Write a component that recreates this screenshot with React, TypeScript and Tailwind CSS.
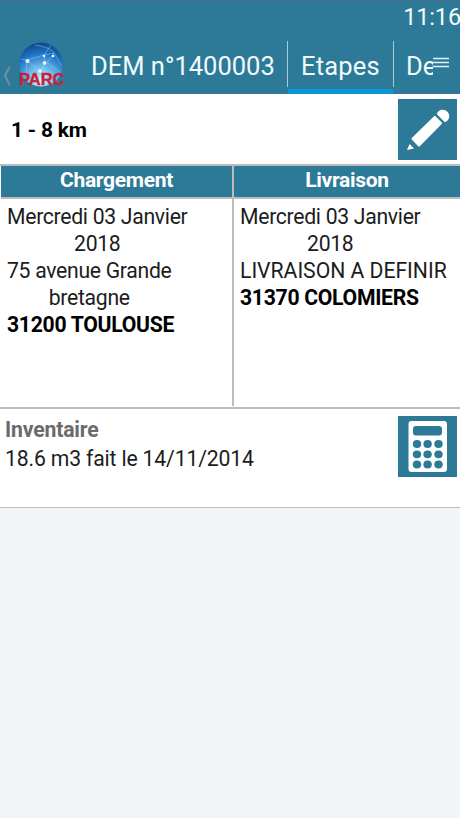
interface StopProps {
  title: string;
  lines: string[][];
  city: string;
  className: string;
}

interface TabProps {
  label: string;
  active?: boolean;
  className: string;
}

function Globe() {
  return (
    <svg viewBox="0 0 46 46" className="block h-[46px] w-[46px]">
      <defs>
        <radialGradient id="globe" cx="50%" cy="88%" r="90%">
          <stop offset="0" stopColor="#d9f4fd" />
          <stop offset="0.35" stopColor="#6cbcec" />
          <stop offset="0.7" stopColor="#1f75c4" />
          <stop offset="1" stopColor="#0c4288" />
        </radialGradient>
      </defs>
      <circle cx="23" cy="22.5" r="22" fill="url(#globe)" />
      <g fill="none" stroke="#a9dbf5" strokeWidth="0.7" opacity="0.6">
        <path d="M3 17 9 18 26 13 36 11 43 23M9 18 22 30 36 11M26 13 27 19 22 30M9 18 8 32M27 19 42 30M17 3Q32 5 36 11M26 13 33 3" />
      </g>
      <g fill="#f1fbff">
        <circle cx="9.5" cy="19" r="2" />
        <circle cx="26" cy="14" r="1.2" />
        <circle cx="26.5" cy="21" r="1.8" />
        <circle cx="35" cy="14" r="1.3" />
        <circle cx="22" cy="29" r="1.8" />
      </g>
    </svg>
  );
}

function Pencil() {
  return (
    <svg viewBox="0 0 59 61" className="h-[61px] w-[59px] fill-white">
      <path d="M37.6 17.2 43.8 23.6Q44.4 24.3 43.7 25L21.8 47.3Q21 48 20.2 47.2L13.8 40.6Q13.1 39.8 13.8 39L36 17.2Q36.8 16.4 37.6 17.2Z" />
      <path d="M38.8 15A6.4 6.4 0 1 1 46.8 23.2Z" />
      <path d="M11.6 45 16 49.6 9 51Z" />
    </svg>
  );
}

function Calculator() {
  return (
    <svg viewBox="0 0 59 61" className="h-[61px] w-[59px]">
      <rect x="10.5" y="5" width="38.5" height="51" rx="3" fill="#fff" />
      <g fill="#2c7a98">
        <rect x="15" y="10" width="29" height="9.5" rx="3" />
        {[28, 38.3, 48.5].map((y) =>
          [19, 29.6, 40.5].map((x) => (
            <ellipse key={`${x}-${y}`} cx={x} cy={y} rx="4.2" ry="3.9" />
          ))
        )}
      </g>
    </svg>
  );
}

function Tab({ label, active, className }: TabProps) {
  return (
    <div className={`flex h-full flex-col ${className}`}>
      <span className="mt-[8px] h-[36px] whitespace-nowrap text-[25.5px] leading-[36px]">{label}</span>
      {active && <span className="mt-auto h-[5px] bg-[#0b98d8]" />}
    </div>
  );
}

function Stop({ title, lines, city, className }: StopProps) {
  return (
    <div className={`flex flex-col ${className}`}>
      <h2 className="h-[33px] border-b-2 border-[#bcbcbc] bg-[#2c7a98] text-center text-[21px] font-bold leading-[29px] tracking-[-0.3px] text-white">
        {title}
      </h2>
      <div className="pl-[6px] pt-[5px] text-[21.2px] leading-[26.9px] tracking-[-0.3px]">
        {lines.map((parts) => (
          <p key={parts[0]} className={parts.length > 1 ? "w-fit text-center" : "tracking-[-0.03px]"}>
            {parts.map((part) => (
              <span key={part} className="block whitespace-nowrap">{part}</span>
            ))}
          </p>
        ))}
        <p className="font-bold text-black">{city}</p>
      </div>
    </div>
  );
}

export default function App() {
  return (
    <div className="flex h-[818px] w-[460px] flex-col overflow-hidden bg-[#f2f5f8] font-['Roboto','Liberation_Sans',sans-serif] text-[#1c1c1c]">
      <header className="h-[94px] shrink-0 border-t border-[#4c6c85] bg-[#2c7a98] text-[#f1fafc]">
        <div className="flex h-[39px] justify-end text-[23.5px] leading-[32px]">
          <time className="-mr-[1px] tracking-[-0.15px]">11:16</time>
        </div>
        <nav className="flex h-[54px]">
          <div className="flex w-[72px] shrink-0">
            <svg viewBox="0 0 18 54" className="h-[54px] w-[18px] shrink-0 fill-none stroke-[#71919a] stroke-2">
              <path d="M9.5 27 5 35.5 9.5 45" />
            </svg>
            <div className="relative pt-[2px]">
              <Globe />
              <span className="absolute left-[1px] top-[30px] text-[16.5px] font-bold leading-[19px] [font-family:'Liberation_Sans',sans-serif] text-[#c91f38] [-webkit-text-stroke:0.4px_#c91f38]">PARC</span>
            </div>
          </div>
          <Tab label="DEM n°1400003" className="w-[215px] shrink-0 pl-[19px]" />
          <div className="mt-[1px] h-[46px] w-px shrink-0 bg-[#a9cad6]" />
          <Tab label="Etapes" active className="w-[105px] shrink-0 text-center tracking-[0.2px]" />
          <div className="mt-[1px] h-[46px] w-px shrink-0 bg-[#a9cad6]" />
          <Tab label="De" className="w-[39px] shrink-0 overflow-hidden pl-[12px]" />
          <svg viewBox="0 0 17 54" className="h-[54px] w-[17px] shrink-0 stroke-[#e3f1f5] stroke-[1.5]">
            <path d="M0 18.5H16M0 22.5H16M0 26.5H16" />
          </svg>
        </nav>
      </header>

      <section className="flex h-[72px] shrink-0 justify-between border-b-2 border-[#bcbcbc] bg-white pl-[11px] pr-[3px] pt-[5px]">
        <h1 className="pt-[16px] text-[21px] font-bold leading-[30px] tracking-[-0.2px] text-black">1 - 8 km</h1>
        <button className="h-[61px] w-[59px] bg-[#2c7a98]"><Pencil /></button>
      </section>

      <section className="flex h-[241px] shrink-0 bg-white pl-[1px]">
        <Stop
          title="Chargement"
          lines={[["Mercredi 03 Janvier", "2018"], ["75 avenue Grande", "bretagne"]]}
          city="31200 TOULOUSE"
          className="w-[231px]"
        />
        <div className="h-[240px] w-[2px] bg-[#bcbcbc]" />
        <Stop
          title="Livraison"
          lines={[["Mercredi 03 Janvier", "2018"], ["LIVRAISON A DEFINIR"]]}
          city="31370 COLOMIERS"
          className="flex-1"
        />
      </section>

      <section className="flex h-[101px] shrink-0 justify-between border-b border-t-2 border-[#bcbcbc] bg-white pl-[5px] pr-[3px] pt-[7px]">
        <div className="text-[21.2px] leading-[29px] tracking-[-0.16px]">
          <h2 className="-mt-[1px] font-bold text-[#6b6b6b]">Inventaire</h2>
          <p>18.6 m3 fait le 14/11/2014</p>
        </div>
        <button className="h-[61px] w-[59px] bg-[#2c7a98]"><Calculator /></button>
      </section>
    </div>
  );
}
